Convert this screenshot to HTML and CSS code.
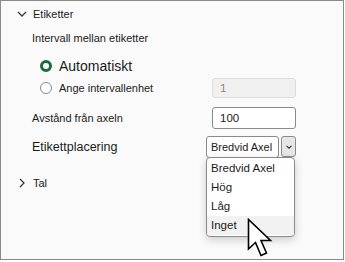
FILE: index.html
```html
<!DOCTYPE html>
<html lang="sv">
<head>
<meta charset="utf-8">
<link rel="stylesheet" href="styles.css">
</head>
<body>
<div class="panel">
  <div class="section-head">
    <svg class="chev" width="10" height="10" viewBox="0 0 10 10"><path d="M1 3 L5 7 L9 3" fill="none" stroke="#3a3a3a" stroke-width="1.3"/></svg>
    <span>Etiketter</span>
  </div>
  <div class="sub">Intervall mellan etiketter</div>
  <div class="radio-row big">
    <span class="radio checked"></span>
    <span>Automatiskt</span>
  </div>
  <div class="row r-ange">
    <div class="radio-row">
      <span class="radio"></span>
      <span>Ange intervallenhet</span>
    </div>
    <div class="input disabled">1</div>
  </div>
  <div class="row r-avst">
    <div class="label">Avstånd från axeln</div>
    <div class="input">100</div>
  </div>
  <div class="row r-plac">
    <div class="label big-label">Etikettplacering</div>
    <div class="select">
      <div class="select-box">Bredvid Axel</div>
      <div class="select-btn">
        <svg width="6" height="4" viewBox="0 0 6 4"><path d="M0.5 0.8 L3 3.2 L5.5 0.8" fill="none" stroke="#333" stroke-width="1.1"/></svg>
      </div>
    </div>
  </div>
  <div class="section-head tal">
    <svg class="chev" width="10" height="10" viewBox="0 0 10 10"><path d="M3 1 L7 5 L3 9" fill="none" stroke="#3a3a3a" stroke-width="1.3"/></svg>
    <span>Tal</span>
  </div>

  <ul class="dropdown">
    <li>Bredvid Axel</li>
    <li>Hög</li>
    <li>Låg</li>
    <li class="hover">Inget</li>
  </ul>

  <svg class="cursor" width="30" height="42" viewBox="0 0 30 42">
    <path d="M1.5 1.5 L1.5 31 L8.5 24.5 L14 37.5 L19.5 35 L14 22.5 L23.5 22.5 Z" fill="#fff" stroke="#000" stroke-width="1.6" stroke-linejoin="miter"/>
  </svg>
</div>
</body>
</html>
```

FILE: styles.css
```css
* { box-sizing: border-box; }
html, body { margin: 0; padding: 0; background: #fff; }
.panel {
  position: relative;
  width: 344px;
  height: 260px;
  border: 1px solid #8a8a8a;
  background: #fafafa;
  font-family: "Liberation Sans", Arial, sans-serif;
  font-size: 11px;
  color: #1b1b1b;
}
.section-head {
  display: flex;
  align-items: center;
  height: 18px;
  margin-top: 4px;
  padding-left: 16px;
  gap: 6px;
}
.section-head.tal { margin-top: 16px; }
.chev { flex: none; }
.sub {
  height: 18px;
  line-height: 18px;
  margin-top: 6px;
  padding-left: 31px;
}
.radio-row {
  display: flex;
  align-items: center;
  gap: 7px;
  padding-left: 39px;
}
.radio-row.big {
  height: 20px;
  margin-top: 9px;
  font-size: 14px;
}
.radio {
  width: 12px;
  height: 12px;
  border-radius: 50%;
  border: 1px solid #8a8a8a;
  background: #fff;
  flex: none;
}
.radio.checked {
  border: 3px solid #1e6b3a;
}
.row {
  display: flex;
  align-items: center;
  justify-content: space-between;
  padding-right: 47px;
}
.row .radio-row { padding-left: 39px; }
.row .label { padding-left: 31px; }
.big-label { font-size: 12.5px; }
.r-ange { height: 20px; margin-top: 2px; }
.r-avst { height: 22px; margin-top: 9px; }
.r-plac { height: 22px; margin-top: 7px; }
.input {
  width: 84px;
  height: 22px;
  border: 1px solid #8a8a8a;
  border-radius: 3px;
  background: #fff;
  padding-left: 7px;
  line-height: 20px;
  font-size: 11.5px;
}
.input.disabled {
  height: 20px;
  line-height: 18px;
  background: #f0f0f0;
  border-color: #dcdcdc;
  color: #8a8a8a;
}
.select {
  display: flex;
  width: 90px;
  height: 22px;
  gap: 2px;
}
.select-box {
  width: 73px;
  height: 22px;
  border: 1px solid #8a8a8a;
  border-radius: 3px;
  background: #fff;
  padding-left: 4px;
  line-height: 20px;
  white-space: nowrap;
  overflow: hidden;
  font-size: 11px;
}
.select-btn {
  width: 15px;
  height: 21px;
  border: 1px solid #8a8a8a;
  border-radius: 3px;
  background: #e6e6e6;
  display: flex;
  align-items: center;
  justify-content: center;
}
.dropdown {
  position: absolute;
  left: 205px;
  top: 156px;
  width: 89px;
  margin: 0;
  padding: 1px 0;
  list-style: none;
  background: #fff;
  border: 1px solid #8a8a8a;
  border-radius: 4px;
  box-shadow: 0 3px 8px rgba(0,0,0,0.18);
  overflow: hidden;
  font-size: 11.5px;
}
.dropdown li {
  height: 19px;
  line-height: 19px;
  padding-left: 4px;
}
.dropdown li.hover { background: #f2f2f2; }
.cursor {
  position: absolute;
  left: 246px;
  top: 217px;
}
```
